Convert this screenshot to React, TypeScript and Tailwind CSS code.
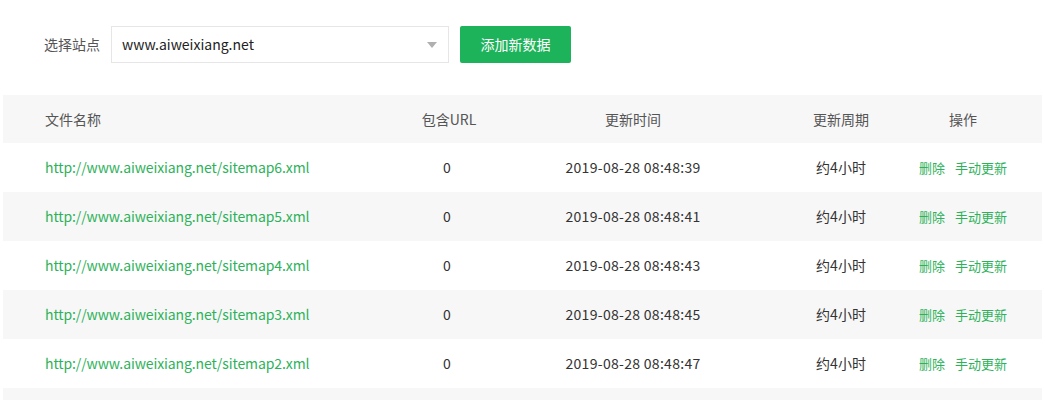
type Row = { file: string; count: number; time: string; period: string }

const rows: Row[] = [
  { file: 'http://www.aiweixiang.net/sitemap6.xml', count: 0, time: '2019-08-28 08:48:39', period: '约4小时' },
  { file: 'http://www.aiweixiang.net/sitemap5.xml', count: 0, time: '2019-08-28 08:48:41', period: '约4小时' },
  { file: 'http://www.aiweixiang.net/sitemap4.xml', count: 0, time: '2019-08-28 08:48:43', period: '约4小时' },
  { file: 'http://www.aiweixiang.net/sitemap3.xml', count: 0, time: '2019-08-28 08:48:45', period: '约4小时' },
  { file: 'http://www.aiweixiang.net/sitemap2.xml', count: 0, time: '2019-08-28 08:48:47', period: '约4小时' },
]

const cols = 'grid grid-cols-[394px_100px_272px_144px_100px] items-center'

export default function App() {
  return (
    <div className="h-[400px] w-[1045px] overflow-hidden bg-white font-['Noto_Sans_CJK_SC','Noto_Sans',sans-serif] text-[14px] text-[#333]">
      {/* 工具栏 */}
      <div className="flex h-[95px] items-center pb-[6px] pl-[44px]">
        <span className="mr-[11px] text-[#555]">选择站点</span>
        <div className="flex h-[37px] w-[338px] items-center justify-between border border-[#e6e6e6] pl-[10px] pr-[7px] text-[#222]">
          <span>www.aiweixiang.net</span>
          <span className="mr-[4px] h-0 w-0 border-x-[5px] border-t-[6px] border-x-transparent border-t-[#b0b0b0]" />
        </div>
        <button
          type="button"
          className="ml-[11px] h-[37px] w-[111px] rounded-[2px] bg-[#1db35a] text-[14px] text-white"
        >
          添加新数据
        </button>
      </div>

      {/* 表格 */}
      <div className="ml-[3px] w-[1039px]">
        <div className={`${cols} h-[48px] bg-[#f7f7f7] text-[#555]`}>
          <span className="pl-[42px]">文件名称</span>
          <span className="pl-[4px] text-center">包含URL</span>
          <span className="text-center">更新时间</span>
          <span className="text-center">更新周期</span>
          <span className="text-center">操作</span>
        </div>
        {rows.map((r, i) => (
          <div key={r.file} className={`${cols} h-[49px] ${i % 2 === 1 ? 'bg-[#f7f7f7]' : 'bg-white'}`}>
            <span className="pl-[42px] tracking-[-0.1px] text-[#2db25a]">{r.file}</span>
            <span className="text-center text-[#333]">{r.count}</span>
            <span className="text-center tracking-[0.3px] text-[#333]">{r.time}</span>
            <span className="text-center text-[#333]">{r.period}</span>
            <span className="flex justify-center gap-[10px] whitespace-nowrap text-[13px] text-[#2db25a]">
              <a>删除</a>
              <a>手动更新</a>
            </span>
          </div>
        ))}
        <div className="h-[49px] bg-[#f7f7f7]" />
      </div>
    </div>
  )
}
